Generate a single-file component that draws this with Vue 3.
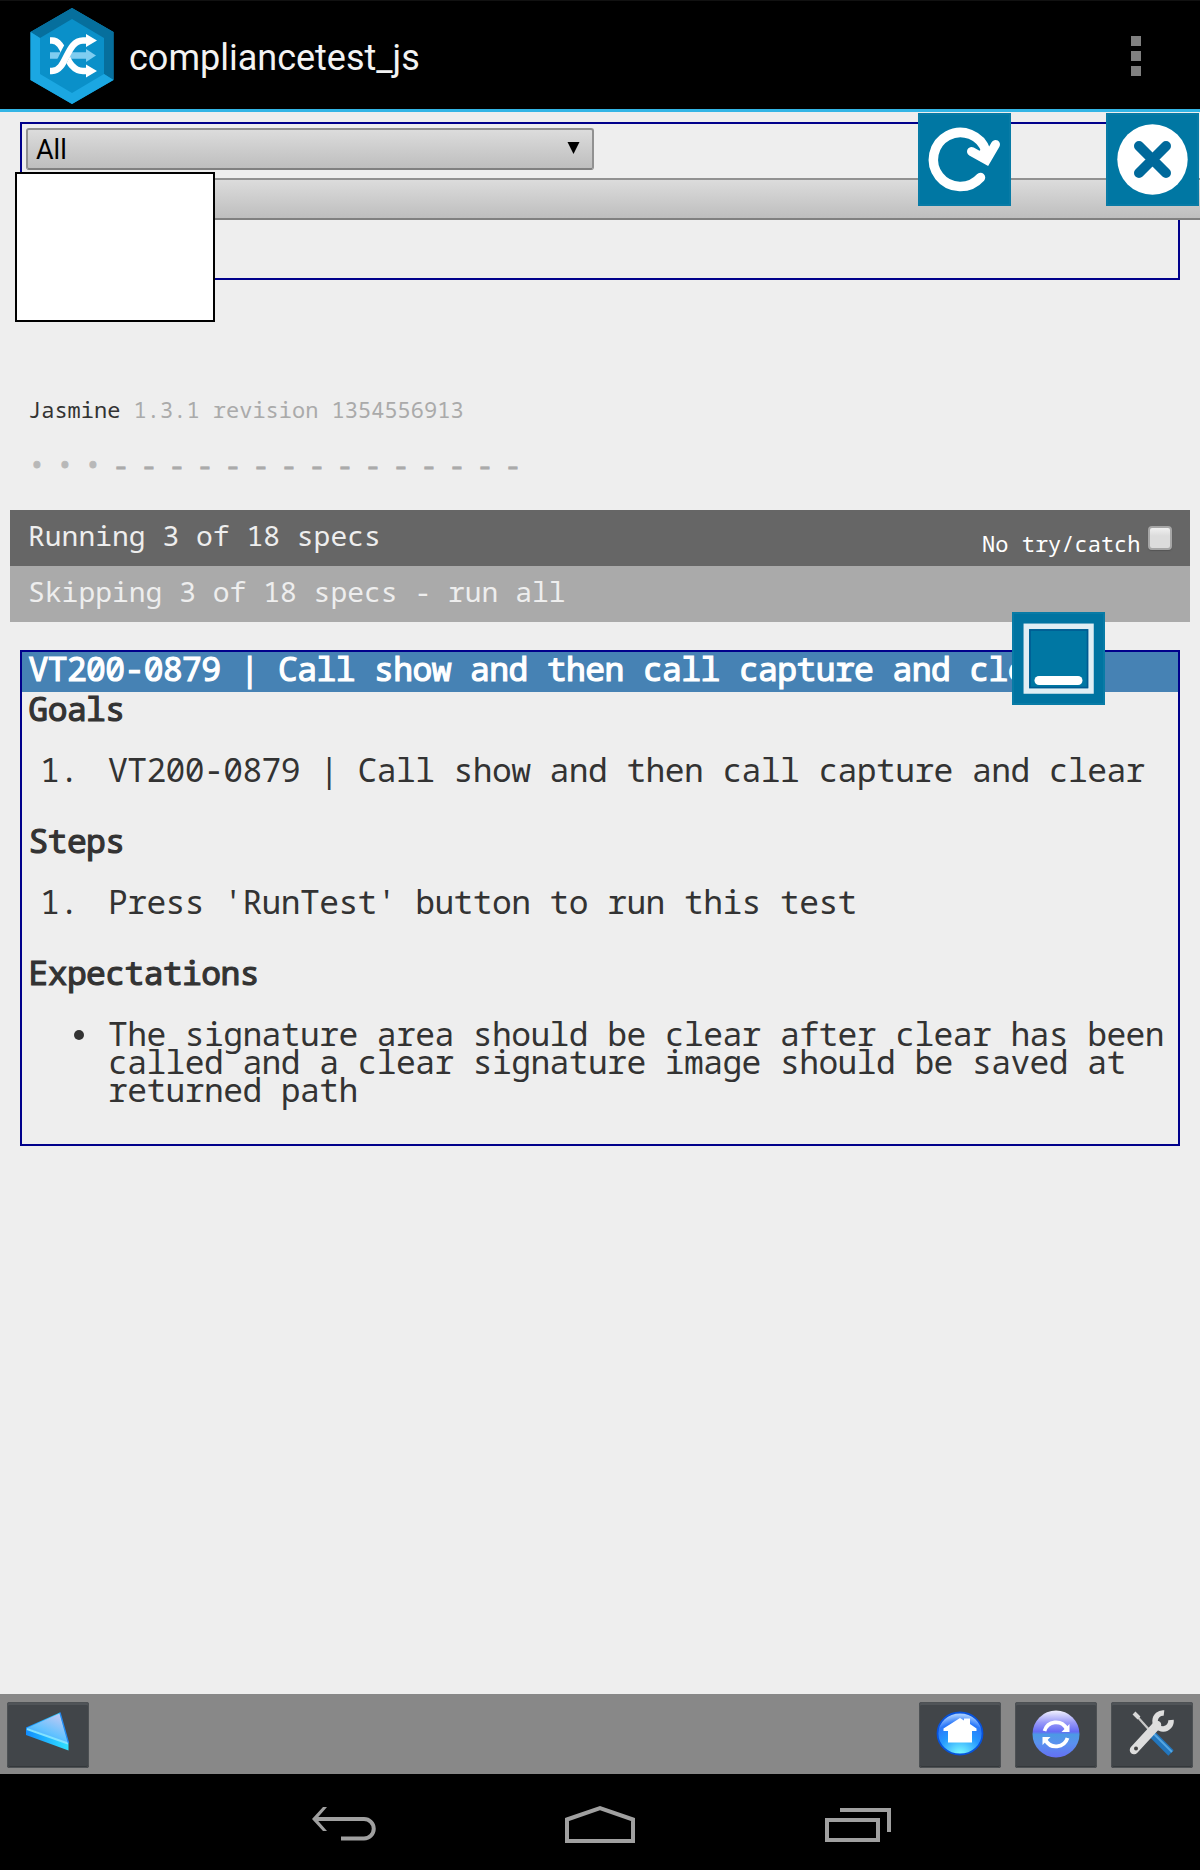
<script setup>
const symbols = ['•', '•', '•', ...Array(15).fill('-')]
</script>

<template>
  <div class="screen">
    <header class="titlebar">
      <svg class="logo" viewBox="0 0 84 96" width="84" height="96">
        <path d="M42 0 83.500 24V72L42 96 .500 72V24Z" fill="#0a90c9" />
        <path d="M.5 24 42 0 83.500 24V72L74 66V30L42 11 10 30Z" fill="#066f9d" />
        <path d="M.5 24 10 30V66L42 85 74 66 83.500 72 42 96 .5 72Z" fill="#1ba7e2" />
        <path d="M20 47.500H57" stroke="#7fcdf0" stroke-width="6.500" />
        <path d="M56 41 66 47.500 56 54Z" fill="#7fcdf0" />
        <path d="M20 32.500H22C36 32.500 35 63 53 63H57" stroke="#fff" stroke-width="6.500" fill="none" />
        <path d="M27 60C36 52 36 32.500 50 33" stroke="#0a90c9" stroke-width="10" fill="none" />
        <path d="M20 63H22C37 63 36 32.500 53 32.500H57" stroke="#fff" stroke-width="6.500" fill="none" />
        <path d="M56 26 67 32.500 56 39ZM56 56.500 67 63 56 69.500Z" fill="#fff" />
      </svg>
      <span class="title">compliancetest_js</span>
      <div class="overflow"><i></i><i></i><i></i></div>
    </header>

    <main class="page">
      <section class="controls">
        <div class="select"><span>All</span><svg width="13" height="12" viewBox="0 0 13 12"><path d="M.5 0H12.500L6.500 12Z" /></svg></div>
        <div class="runbutton"></div>
        <div class="signature"></div>
      </section>

      <div class="banner">Jasmine <span>1.3.1 revision 1354556913</span></div>
      <div class="symbols">
        <span v-for="(s, i) in symbols" :key="i" :class="{ dot: s === '•' }">{{ s }}</span>
      </div>
      <div class="bar running"><span>Running 3 of 18 specs</span><label>No try/catch<i></i></label></div>
      <div class="bar skipping">Skipping 3 of 18 specs - run all</div>

      <section class="spec">
        <h1>VT200-0879 | Call show and then call capture and clear</h1>
        <h2>Goals</h2>
        <div class="item"><b>1.</b><p>VT200-0879 | Call show and then call capture and clear</p></div>
        <h2>Steps</h2>
        <div class="item"><b>1.</b><p>Press 'RunTest' button to run this test</p></div>
        <h2>Expectations</h2>
        <div class="item"><i></i><p>The signature area should be clear after clear has been<br>called and a clear signature image should be saved at<br>returned path</p></div>
      </section>
    </main>

    <svg class="tile refresh" viewBox="0 0 93 93">
      <rect width="93" height="93" fill="#087ba6" /><rect x="2" y="2" width="89" height="89" fill="#0077a3" />
      <path d="M62.500 64.500A27 27 0 1 1 68 38" fill="none" stroke="#fff" stroke-width="9.500" stroke-linecap="round" />
      <path d="M53.500 38.500 68.500 47 77.500 31.500" fill="none" stroke="#fff" stroke-width="9" stroke-linecap="round" />
      <path d="M60 39 66 34 73 37 69 52Z" fill="#fff" />
    </svg>
    <svg class="tile close" viewBox="0 0 93 93">
      <rect width="93" height="93" fill="#087ba6" /><rect x="2" y="2" width="89" height="89" fill="#0077a3" />
      <circle cx="46.500" cy="46.500" r="35.200" fill="#fff" />
      <path d="M33 33 60 60M60 33 33 60" stroke="#00699b" stroke-width="10" stroke-linecap="round" />
    </svg>
    <svg class="tile minimize" viewBox="0 0 93 93">
      <rect width="93" height="93" fill="#087ba6" /><rect x="2" y="2" width="89" height="89" fill="#0074a1" />
      <rect x="14.300" y="14.300" width="64.700" height="64.700" fill="#0077a3" stroke="#e0eef4" stroke-width="5.500" />
      <rect x="18" y="18" width="57.500" height="57.500" fill="none" stroke="#005a91" stroke-width="1.500" />
      <path d="M27 68.500H66" stroke="#fff" stroke-width="9" stroke-linecap="round" />
    </svg>

    <footer class="toolbar">
      <div class="tool back">
        <svg width="82" height="66" viewBox="0 0 82 66">
          <defs>
            <linearGradient id="tri" x1="0" y1="1" x2=".6" y2="0"><stop offset="0" stop-color="#2494ff" /><stop offset=".5" stop-color="#62c2ff" /><stop offset="1" stop-color="#b6c8f5" /></linearGradient>
            <linearGradient id="edge"><stop offset="0" stop-color="#128dff" /><stop offset="1" stop-color="#31e2ff" /></linearGradient>
          </defs>
          <path d="M19 25.500 53 10.500 61.500 41V48.500L19 33Z" fill="url(#edge)" />
          <path d="M20 26 52.500 11.500 61 41Z" fill="url(#tri)" />
          <path d="M20 27 61 41.500" stroke="#83e2ff" stroke-width="2" />
          <path d="M53 10.500 61.500 41" stroke="#2685ed" stroke-width="1.300" />
        </svg>
      </div>
      <div class="tool">
        <svg width="82" height="66" viewBox="0 0 82 66">
          <defs><radialGradient id="home" cx=".5" cy="1" r=".95"><stop offset="0" stop-color="#7fffff" /><stop offset=".5" stop-color="#269aff" /><stop offset=".8" stop-color="#2b78fa" /><stop offset="1" stop-color="#a5ccff" /></radialGradient></defs>
          <ellipse cx="41" cy="31.500" rx="22.500" ry="21" fill="url(#home)" stroke="#0752db" stroke-width="1.800" />
          <path d="M24.500 26.500 41 16 45 18.500V16.500H51V22L57.500 26.500V29H53V40.500H29V29H24.500Z" fill="#fff" />
        </svg>
      </div>
      <div class="tool">
        <svg width="82" height="66" viewBox="0 0 82 66">
          <defs><linearGradient id="sync" x2="0" y2="1"><stop offset="0" stop-color="#f2f2ff" /><stop offset=".25" stop-color="#9a9bf8" /><stop offset=".45" stop-color="#656bf5" /><stop offset=".51" stop-color="#4c99e5" /><stop offset=".7" stop-color="#5a91ef" /><stop offset="1" stop-color="#6470f3" /></linearGradient></defs>
          <circle cx="41" cy="32" r="23.500" fill="url(#sync)" />
          <path d="M29.500 29A12 12 0 0 1 51.500 26.500M52.500 36A12 12 0 0 1 30.500 38" fill="none" stroke="#fff" stroke-width="3.800" />
          <path d="M54.500 22V30H46.500ZM27.500 43V35H35.500Z" fill="#fff" />
        </svg>
      </div>
      <div class="tool">
        <svg width="82" height="66" viewBox="0 0 82 66">
          <path d="M24 12 41 31" stroke="#c9c9c9" stroke-width="2.200" />
          <path d="M23 11 28 16" stroke="#d8d8d8" stroke-width="4" />
          <path d="M42 33 60 51" stroke="#2276bd" stroke-width="7.500" />
          <path d="M43 32 61 50" stroke="#55a7e2" stroke-width="2" />
          <path d="M23 48 46 23" stroke="#ddd" stroke-width="8.500" stroke-linecap="round" />
          <path d="M53 11A8 8 0 1 0 60 18" fill="none" stroke="#dedede" stroke-width="5.500" />
          <circle cx="25" cy="46.500" r="2" fill="#444" />
        </svg>
      </div>
    </footer>

    <nav class="sysnav">
      <svg width="66" height="36" viewBox="0 0 66 36"><path d="M4 13H52A9.500 9.500 0 0 1 52 32.500H29" /><path d="M0 13 11 1H15L4.500 13 15 25H11Z" class="solid" /></svg>
      <svg width="70" height="38" viewBox="0 0 70 38"><path d="M2 14.500 35 3 68 14.500V36H2Z" /></svg>
      <svg width="66" height="34" viewBox="0 0 66 34"><path d="M2 12H53V32H2ZM15 2H64V24" /></svg>
    </nav>
  </div>
</template>

<style>
body { margin: 0; background: #eee; }
</style>

<style scoped>
* { box-sizing: border-box; }
.screen { position: relative; display: flex; flex-direction: column; width: 1200px; height: 1870px; overflow: hidden; background: #eee; color: #333; font-family: "Droid Sans Mono", "Noto Sans Mono", "DejaVu Sans Mono", monospace; }
svg { display: block; }
.titlebar { display: flex; align-items: center; height: 112px; padding: 0 54px 0 30px; background: #000; border-bottom: 3px solid #33b5e5; border-top: 1px solid #111; }
.logo { margin-top: 1px; }
.title { margin: 6px 0 0 15px; color: #f3f3f3; font: 36px/42px Roboto, sans-serif; }
.overflow { display: flex; flex-direction: column; gap: 5px; margin: 2px 5px 0 auto; }
.overflow i { width: 10px; height: 10px; background: #808080; }
.page { flex: 1; padding: 10px 10px 0; }
.controls { position: relative; height: 158px; margin: 0 10px; padding: 4px; border: 2px solid #00008b; }
.select, .runbutton { height: 42px; border: 2px solid #919191; border-bottom-color: #808080; background: linear-gradient(#dcdcdc, #bebebe); }
.select { display: flex; justify-content: space-between; align-items: flex-start; width: 568px; padding: 0 12px 0 8px; border-radius: 3px; color: #000; font: 27px/40px Roboto, sans-serif; }
.select svg { margin-top: 12px; }
.runbutton { width: 1200px; margin-top: 8px; }
.signature { position: absolute; left: -7px; top: 48px; width: 200px; height: 150px; border: 2px solid #000; background: #fff; }
.banner { margin: 115px 0 0 18px; font-size: 22px; line-height: 28px; white-space: pre; }
.banner span { color: #aaa; }
.symbols { display: flex; height: 28px; margin: 27px 0 0 18px; color: #aaa; font-size: 28px; line-height: 28px; -webkit-text-stroke: 0.8px currentColor; }
.symbols span { width: 28px; text-indent: 0.5px; }
.dot { color: #b8b8b8; }
.bar { display: flex; justify-content: space-between; height: 56px; padding: 0 18px 0 18px; color: #eee; font-size: 28px; line-height: 50px; }
.running { margin-top: 32px; background: #666; }
.running label { display: flex; align-items: flex-start; color: #fff; font-size: 22px; line-height: 66px; }
.running i { width: 24px; height: 24px; margin: 16px 0 0 7.5px; border: 2px solid #a6a6a6; border-radius: 4px; background: linear-gradient(#f0f0f0, #dcdcdc 40%); box-shadow: 0 1px 1px #555; }
.skipping { background: #aaa; }
.spec { height: 496px; margin: 28px 10px 0; border: 2px solid #00008b; font-size: 33px; letter-spacing: -0.6px; line-height: 28px; }
h1, h2, p { margin: 0; font-size: inherit; }
h1, h2 { height: 40px; padding-left: 6.5px; font-weight: 400; line-height: 33.5px; white-space: nowrap; -webkit-text-stroke: 1.2px currentColor; }
h1 { background: #4682b4; color: #fff; }
.item { display: flex; padding: 24px 0 40px; white-space: nowrap; }
.item b { width: 86px; padding-left: 18px; font-weight: 400; }
.item i { width: 10px; height: 10px; margin: 9.5px 24px 0 52px; border-radius: 50%; background: #333; }
.tile { position: absolute; width: 93px; height: 93px; }
.refresh { left: 918px; top: 113px; }
.close { left: 1106px; top: 113px; }
.minimize { left: 1012px; top: 612px; }
.toolbar { display: flex; gap: 14px; height: 80px; padding: 8px 7px; background: #888; }
.tool { width: 82px; height: 66px; border-radius: 3px; background: #414549; box-shadow: inset 0 0 0 1px #4d5154, inset 0 -2px #34383b, inset 0 3px #505458; }
.back { margin-right: auto; }
.sysnav { display: flex; align-items: flex-start; height: 96px; padding: 32px 309px 0 311.5px; background: #000; }
.sysnav svg { fill: none; stroke: #a0a0a0; stroke-width: 4; }
.sysnav svg:nth-child(2) { margin: -1px auto 0 187.5px; }
.sysnav svg:nth-child(3) { margin-top: 2px; }
.sysnav .solid { fill: #a0a0a0; stroke: none; }
</style>
